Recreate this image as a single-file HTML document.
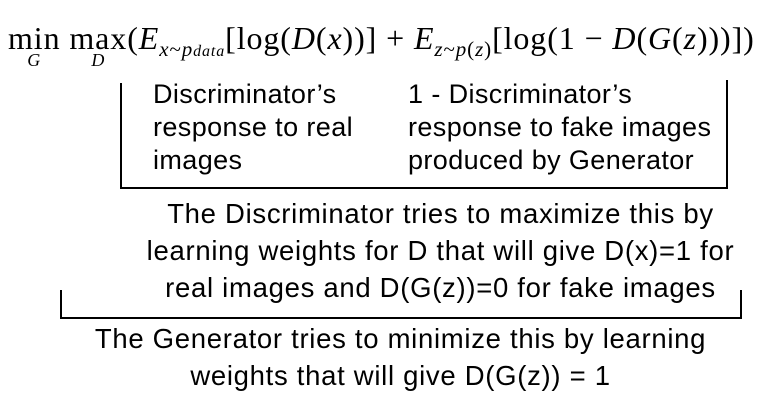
<!DOCTYPE html>
<html><head><meta charset="utf-8"><style>
body{margin:0;width:757px;height:412px;background:#fff;position:relative;overflow:hidden;font-family:"Liberation Sans",sans-serif;color:#000}
.t{position:absolute;white-space:nowrap;font-size:27px;line-height:33px;letter-spacing:0.4px}
.c{position:absolute;white-space:nowrap;font-size:27.5px;letter-spacing:0.7px;left:0;width:757px;text-align:center}
.l{position:absolute;background:#000}
.f{position:absolute;left:8px;top:20px;white-space:nowrap;font-family:"Liberation Serif",serif;font-size:32px;letter-spacing:0.9px}
.f i{font-style:italic}
.sub{font-size:21px;position:relative;top:7px}
.m{display:inline-block;position:relative}
.m .u{position:absolute;left:0;right:0;top:30px;text-align:center;font-size:18px;font-style:italic}
</style></head><body>
<div class="f"><span class="m">min<span class="u">G</span></span> <span class="m">max<span class="u">D</span></span>(<i>E</i><span class="sub"><i>x</i>~<i>p<span style="font-size:16px">data</span></i></span>[log(<i>D</i>(<i>x</i>))] + <i>E</i><span class="sub"><i>z</i>~<i>p</i>(<i>z</i>)</span>[log(1 − <i>D</i>(<i>G</i>(<i>z</i>)))])</div>

<div class="l" style="left:120px;top:83px;width:2px;height:106px"></div>
<div class="l" style="left:726px;top:80px;width:2px;height:109px"></div>
<div class="l" style="left:120px;top:187px;width:608px;height:2px"></div>

<div class="t" style="left:153px;top:78px">Discriminator’s<br>response to real<br>images</div>
<div class="t" style="left:408px;top:78px">1 - Discriminator’s<br>response to fake images<br>produced by Generator</div>

<div class="c" style="top:198px;left:62px">The Discriminator tries to maximize this by</div>
<div class="c" style="top:235px;left:62px">learning weights for D that will give D(x)=1 for</div>
<div class="c" style="top:272px;left:62px">real images and D(G(z))=0 for fake images</div>

<div class="l" style="left:60px;top:290px;width:2px;height:29px"></div>
<div class="l" style="left:740px;top:290px;width:2px;height:29px"></div>
<div class="l" style="left:60px;top:317px;width:682px;height:2px"></div>

<div class="c" style="top:323px;left:22px">The Generator tries to minimize this by learning</div>
<div class="c" style="top:360px;left:22px">weights that will give D(G(z)) = 1</div>
</body></html>
